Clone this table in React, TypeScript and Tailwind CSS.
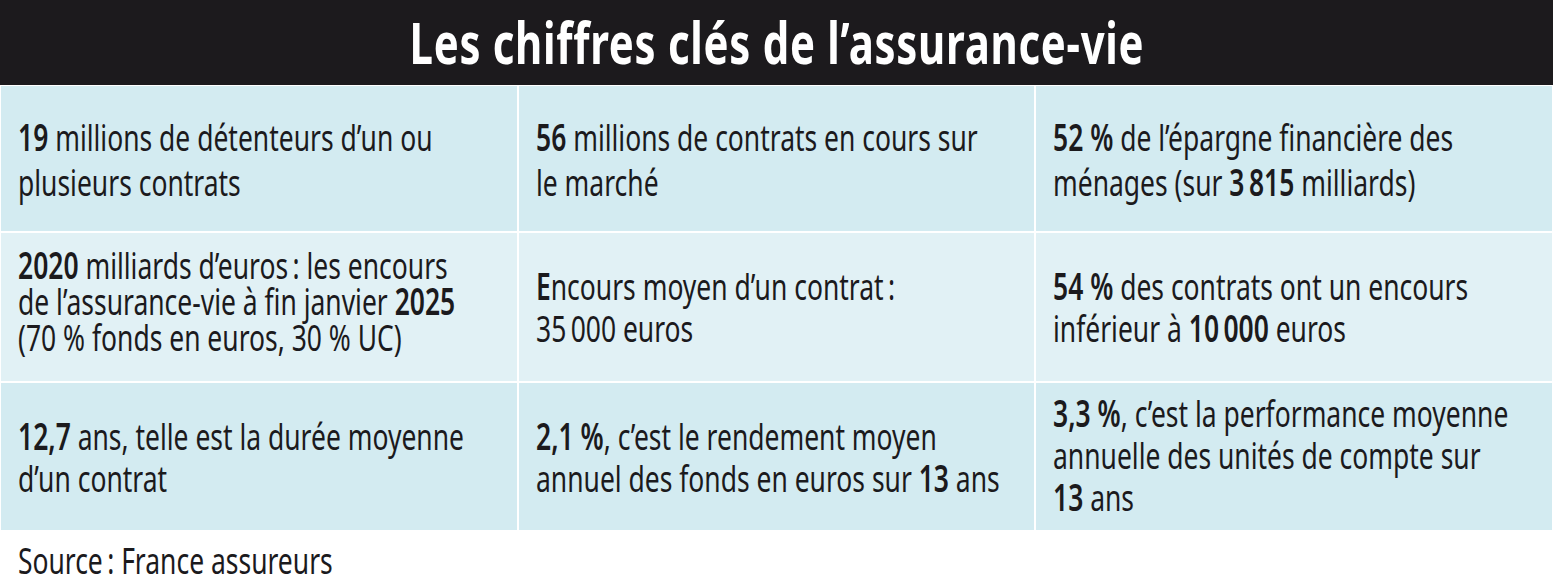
const font = {
  fontFamily: '"Noto Sans", "Open Sans", "DejaVu Sans", sans-serif',
};

function B({ children }: { children: React.ReactNode }) {
  return <span className="font-semibold">{children}</span>;
}

type Cell = {
  lead: string;
  bg: string;
  extra?: string;
  lines: React.ReactNode[];
};

const cells: Cell[] = [
  {
    lead: "leading-[45px]",
    bg: "bg-[#d3ebf1]",
    lines: [
      <><B>19</B> millions de détenteurs d’un ou</>,
      <>plusieurs contrats</>,
    ],
  },
  {
    lead: "leading-[45px]",
    bg: "bg-[#d3ebf1]",
    lines: [
      <><B>56</B> millions de contrats en cours sur</>,
      <>le marché</>,
    ],
  },
  {
    lead: "leading-[45px]",
    bg: "bg-[#d3ebf1]",
    lines: [
      <><B>52 %</B> de l’épargne financière des</>,
      <>ménages (sur <B>3&#8201;815</B> milliards)</>,
    ],
  },
  {
    lead: "leading-[36px]",
    bg: "bg-[#e1f1f5]",
    extra: "pb-[12px]",
    lines: [
      <><B>2020</B> milliards d’euros&#8201;: les encours</>,
      <>de l’assurance-vie à fin janvier <B>2025</B></>,
      <>(70 % fonds en euros, 30 % UC)</>,
    ],
  },
  {
    lead: "leading-[42px]",
    bg: "bg-[#e1f1f5]",
    lines: [
      <><B>E</B>ncours moyen d’un contrat&#8201;:</>,
      <>35&#8201;000 euros</>,
    ],
  },
  {
    lead: "leading-[42px]",
    bg: "bg-[#e1f1f5]",
    lines: [
      <><B>54 %</B> des contrats ont un encours</>,
      <>inférieur à <B>10&#8201;000</B> euros</>,
    ],
  },
  {
    lead: "leading-[42px]",
    bg: "bg-[#d3ebf1]",
    lines: [
      <><B>12,7</B> ans, telle est la durée moyenne</>,
      <>d’un contrat</>,
    ],
  },
  {
    lead: "leading-[42px]",
    bg: "bg-[#d3ebf1]",
    lines: [
      <><B>2,1 %</B>, c’est le rendement moyen</>,
      <>annuel des fonds en euros sur <B>13</B> ans</>,
    ],
  },
  {
    lead: "leading-[42px]",
    bg: "bg-[#d3ebf1]",
    extra: "pb-[3px]",
    lines: [
      <><B>3,3 %</B>, c’est la performance moyenne</>,
      <>annuelle des unités de compte sur</>,
      <><B>13</B> ans</>,
    ],
  },
];

export default function App() {
  return (
    <main className="h-[584px] w-[1553px] overflow-hidden bg-white text-[#1b1a1d]" style={font}>
      {/* the print font is condensed; squeeze Noto Sans to the same set width */}
      <header className="flex h-[85px] items-center justify-center bg-[#1c1a1d]">
        <h1 className="origin-center scale-x-[0.735] whitespace-nowrap text-[57px] font-bold leading-none tracking-[1px] text-white">
          Les chiffres clés de l’assurance-vie
        </h1>
      </header>

      <section className="mt-[1px] grid grid-cols-3 grid-rows-[145px_148px_147px] gap-[2px] px-[1px]">
        {cells.map((c, i) => (
          <div key={i} className={`flex items-center overflow-hidden pl-[17px] text-[37px] ${c.bg} ${c.lead} ${c.extra ?? ""}`}>
            <p className="origin-left scale-x-[0.715] whitespace-nowrap">
              {c.lines.map((l, j) => (
                <span key={j} className="block">
                  {l}
                </span>
              ))}
            </p>
          </div>
        ))}
      </section>

      <p className="mt-[10px] origin-left scale-x-[0.715] whitespace-nowrap pl-[25px] text-[37px] leading-[40px]">
        Source&#8201;: France assureurs
      </p>
    </main>
  );
}
